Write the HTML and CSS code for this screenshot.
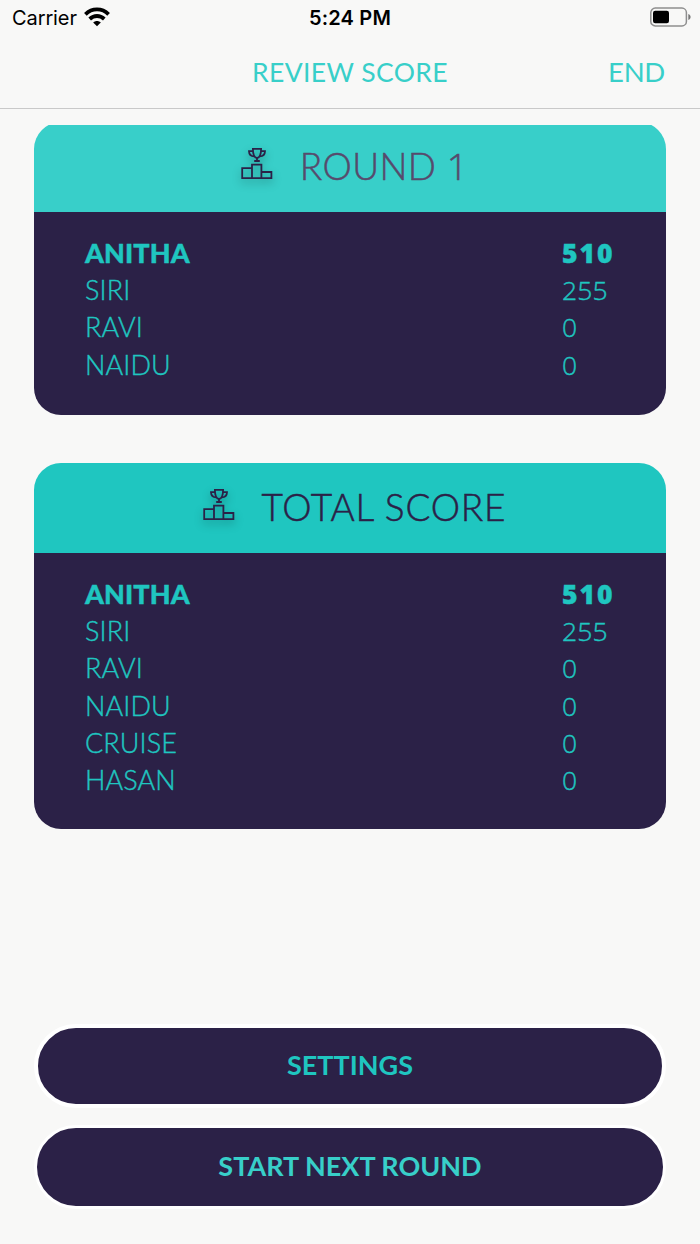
FILE: index.html
```html
<!DOCTYPE html>
<html lang="en">
<head>
  <meta charset="UTF-8">
  <meta name="viewport" content="width=device-width, initial-scale=1.0">
  <title>Review Score</title>
  <link rel="stylesheet" href="styles.css">
</head>
<body>
  <svg class="symbols" width="0" height="0">
    <symbol id="podium" viewBox="0 0 32 34">
      <g fill="none" stroke="#2b2147" stroke-width="1.8">
        <path d="M1.200 21.200h9.800v10H1.200zM11 17.600h9.400v13.600H11zM20.400 25h10v6.200h-10z"/>
        <path d="M11.900 1.900h8.200c0 4.800-.9 8.400-4.100 9.200-3.200-.8-4.100-4.400-4.100-9.200z"/>
        <path d="M12 4.200H8c.1 3.200 1.700 5 5.200 5.100M20 4.200h4c-.1 3.200-1.700 5-5.200 5.100M16 11v2.700M13.200 14h5.600"/>
      </g>
    </symbol>
  </svg>

  <div class="status-bar">
    <div class="carrier">
      <span>Carrier</span>
      <svg class="wifi" viewBox="0 0 26 20" width="26" height="20">
        <g fill="none" stroke="#000" stroke-width="3.800">
          <path d="M1.400 7.300C8 .8 18 .8 24.600 7.300"/>
          <path d="M5.700 12c4.300-4 10.300-4 14.600 0"/>
        </g>
        <path d="M9.200 15.400c2.300-2 5.300-2 7.600 0L13 19.300z"/>
      </svg>
    </div>
    <span class="time">5:24 PM</span>
    <svg class="battery" viewBox="0 0 42 20" width="42" height="20">
      <rect x="0.800" y="1.100" width="35.600" height="17.800" rx="4.500" fill="none" stroke="#8e8e8e" stroke-width="1.500"/>
      <rect x="3" y="3.700" width="16" height="12.600" rx="2.200"/>
      <path d="M38.300 7c3 .8 3 5.200 0 6z" fill="#777"/>
    </svg>
  </div>

  <header class="nav-bar">
    <h1 class="nav-title">REVIEW SCORE</h1>
    <a class="nav-end">END</a>
  </header>

  <main class="scores">
    <section class="card card-round">
      <div class="card-header">
        <svg class="podium"><use href="#podium"/></svg>
        <h2>ROUND <span class="number">1</span></h2>
      </div>
      <ul class="score-list">
        <li class="leader"><span>ANITHA</span><span class="points">510</span></li>
        <li><span>SIRI</span><span class="points">255</span></li>
        <li><span>RAVI</span><span class="points">0</span></li>
        <li><span>NAIDU</span><span class="points">0</span></li>
      </ul>
    </section>

    <section class="card card-total">
      <div class="card-header">
        <svg class="podium"><use href="#podium"/></svg>
        <h2>TOTAL SCORE</h2>
      </div>
      <ul class="score-list">
        <li class="leader"><span>ANITHA</span><span class="points">510</span></li>
        <li><span>SIRI</span><span class="points">255</span></li>
        <li><span>RAVI</span><span class="points">0</span></li>
        <li><span>NAIDU</span><span class="points">0</span></li>
        <li><span>CRUISE</span><span class="points">0</span></li>
        <li><span>HASAN</span><span class="points">0</span></li>
      </ul>
    </section>
  </main>

  <footer class="actions">
    <button class="btn btn-settings">SETTINGS</button>
    <button class="btn btn-next">START NEXT ROUND</button>
  </footer>
</body>
</html>
```
FILE: styles.css
```css
* {
  margin: 0;
  padding: 0;
  box-sizing: border-box;
}
body {
  width: 700px;
  height: 1244px;
  display: flex;
  flex-direction: column;
  font-family: Lato, 'Liberation Sans', sans-serif;
  background-color: #f8f8f7;
  overflow: hidden;
}
.symbols {
  display: none;
}
.status-bar {
  height: 36px;
  display: grid;
  grid-template-columns: 1fr auto 1fr;
  align-items: center;
  padding: 0 8px 1px;
  font-family: Inter, 'Liberation Sans', sans-serif;
  font-size: 20px;
  color: #000;
}
.carrier {
  display: flex;
  align-items: center;
  gap: 7px;
  padding-left: 4px;
  letter-spacing: -0.1px;
}
.wifi {
  margin-bottom: 1px;
}
.time {
  font-weight: 600;
  letter-spacing: 0.2px;
}
.battery {
  justify-self: end;
  margin-bottom: 1px;
}
.nav-bar {
  height: 73px;
  display: grid;
  grid-template-columns: 1fr auto 1fr;
  align-items: center;
  padding: 0 35px 1px;
  border-bottom: 1px solid #c9c9c9;
  color: #38cfc9;
}
.nav-title {
  grid-column: 2;
  font-size: 26.500px;
  font-weight: 400;
  letter-spacing: 0.4px;
}
.nav-end {
  justify-self: end;
  padding-bottom: 1px;
  font-size: 27.500px;
  font-weight: 400;
  letter-spacing: -0.3px;
}
.scores {
  flex: 1;
  margin-top: 16px;
  padding: 0 34px;
  overflow: hidden;
}
.card {
  display: flex;
  flex-direction: column;
  border-radius: 27px;
  overflow: hidden;
}
/* first card is scrolled slightly under the nav bar */
.card-round {
  height: 293px;
  margin-top: -3px;
  margin-bottom: 48px;
}
.card-total {
  height: 366px;
}
.card-header {
  height: 90px;
  display: flex;
  justify-content: center;
  align-items: center;
  gap: 27px;
  padding: 0 0 2px 9px;
  background-color: #1fc6c0;
}
.card-round .card-header {
  background-color: #38cfc9;
}
.card-header h2 {
  font-size: 37px;
  font-weight: 300;
  line-height: 44px;
  letter-spacing: 0.8px;
  color: #2b2147;
  -webkit-text-stroke: 0.5px;
}
.card-round h2 {
  letter-spacing: 0.4px;
  color: #574a6c;
}
.number {
  font-family: 'Open Sans', sans-serif;
}
.podium {
  width: 32px;
  height: 34px;
  margin-bottom: 4px;
  filter: drop-shadow(0 4px 4px rgba(0, 0, 0, 0.3));
}
.score-list {
  flex: 1;
  list-style: none;
  padding: 22px 51px 0;
  font-size: 27px;
  font-weight: 300;
  background-color: #2b2147;
  color: #1fc6c0;
  -webkit-text-stroke: 0.4px;
}
.score-list li {
  height: 37.200px;
  line-height: 37.200px;
  letter-spacing: 0.1px;
  display: flex;
  justify-content: space-between;
}
.score-list .leader {
  font-weight: 900;
}
.points {
  width: 53px;
  padding-top: 1px;
  font-family: 'Open Sans', sans-serif;
  font-size: 26.500px;
  white-space: nowrap;
}
.leader .points {
  font-weight: 800;
  letter-spacing: 2px;
}
.actions {
  height: 220px;
  display: flex;
  flex-direction: column;
  align-items: center;
  gap: 17px;
}
.btn {
  width: 632px;
  height: 84px;
  padding-bottom: 3px;
  border: 4px solid #fff;
  border-radius: 42px;
  background-color: #2b2147;
  color: #1fc6c0;
  font-family: inherit;
  font-size: 27px;
  font-weight: 700;
}
.btn-next {
  border-width: 3px;
  color: #38cfc9;
}
```
